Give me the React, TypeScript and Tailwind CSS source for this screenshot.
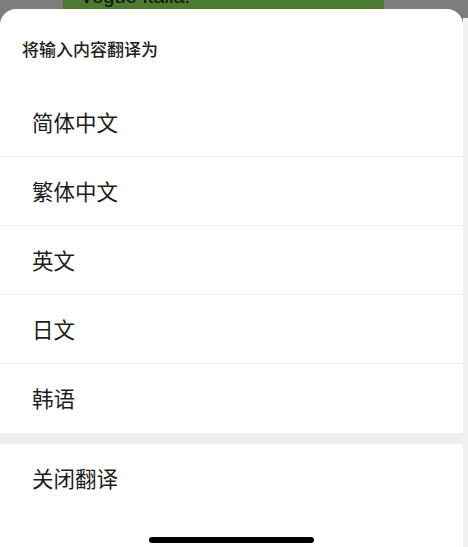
const languages = ["简体中文", "繁体中文", "英文", "日文", "韩语"]

function App() {
  return (
    <div
      className="relative flex h-[547px] w-[468px] flex-col overflow-hidden bg-[#7d7d7d]"
      style={{ fontFamily: '"Noto Sans CJK SC", "Noto Sans", sans-serif' }}
    >
      {/* page behind the sheet */}
      <div className="h-[9px] shrink-0">
        <div className="ml-[63px] h-[9px] w-[321px] overflow-hidden bg-[#4c7a30]">
          <div className="mt-[-16px] pl-[17px] font-['Liberation_Sans'] text-[20px] leading-[24px] text-[#111]">
            Vogue Italia.
          </div>
        </div>
      </div>

      <div className="flex flex-1">
        {/* bottom sheet */}
        <div className="flex w-[463px] flex-col rounded-t-[16px] bg-white">
          <div className="flex h-[79px] items-center pl-[22px] pt-[1px] text-[17px] font-medium text-[#222]">
            将输入内容翻译为
          </div>

          {languages.map((lang, i) => (
            <div
              key={lang}
              className={`flex h-[69px] items-center pl-[32px] text-[21.5px] text-[#1c1c1c] ${
                i < languages.length - 1 ? "border-b border-[#eeeeee]" : ""
              }`}
            >
              {lang}
            </div>
          ))}

          <div className="h-[11px] bg-[#efeff0]" />

          <div className="flex h-[69px] items-center pl-[32px] text-[21.5px] text-[#1c1c1c]">
            关闭翻译
          </div>

          <div className="flex justify-center pt-[24px]">
            <div className="h-[6px] w-[165px] rounded-full bg-black" />
          </div>
        </div>

        {/* edge of the view behind */}
        <div className="mt-[9px] w-[5px] bg-[#f1f1f1]" />
      </div>
    </div>
  )
}

export default App
